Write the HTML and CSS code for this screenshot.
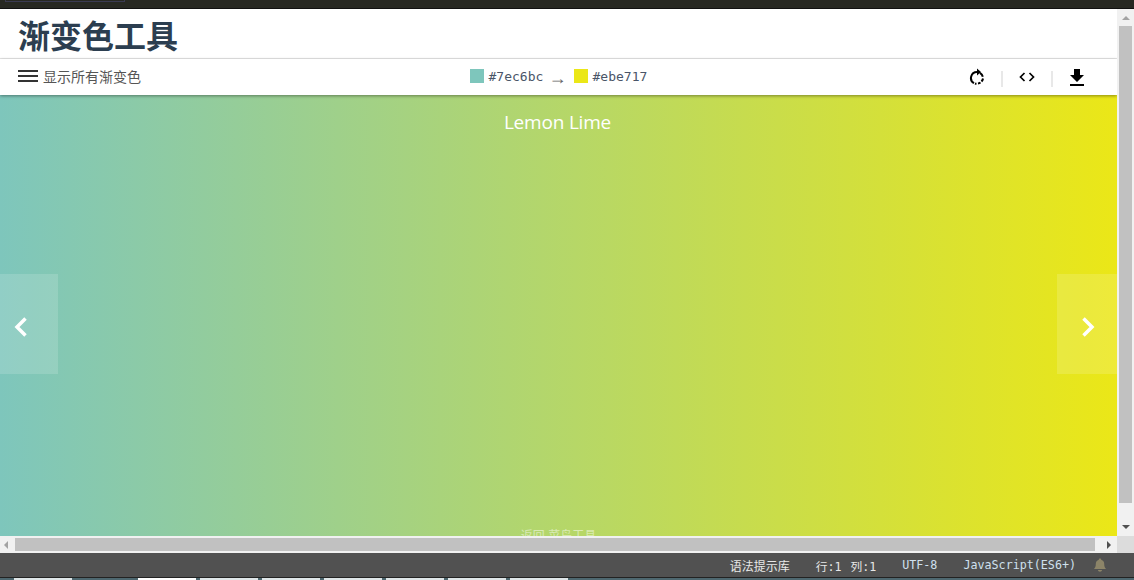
FILE: index.html
```html
<!DOCTYPE html>
<html lang="zh-CN">
<head>
  <meta charset="UTF-8" />
  <title>渐变色工具</title>
  <link rel="stylesheet" href="styles.css">
</head>
<body>
  <div class="topbar"><span class="topbar-tab"></span></div>

  <div class="workspace">
    <div class="preview">
      <header class="title-row">
        <h1>渐变色工具</h1>
      </header>

      <nav class="toolbar">
        <div class="show-all">
          <svg class="menu-icon" width="20" height="12" viewBox="0 0 20 12">
            <path d="M0 1h20M0 6h20M0 11h20" stroke="#333" stroke-width="2" fill="none"/>
          </svg>
          <span>显示所有渐变色</span>
        </div>

        <div class="colors">
          <span class="swatch swatch-start"></span>
          <code>#7ec6bc</code>
          <span class="arrow">→</span>
          <span class="swatch swatch-end"></span>
          <code>#ebe717</code>
        </div>

        <div class="actions">
          <svg class="action-icon" width="16" height="18" viewBox="0 0 16 18">
            <path d="M8 4a6 6 0 0 0-3 11.2" stroke="#000" stroke-width="2" fill="none"/>
            <path d="M8 0.5v7l4-3.500z" fill="#000"/>
            <path d="M11 4.800a6 6 0 0 1 2.800 4M14 10.500a6 6 0 0 1-1.500 3M11.500 14.500a6 6 0 0 1-2.500 1M7.500 15.800a6 6 0 0 1-1.500-.3" stroke="#000" stroke-width="2" fill="none"/>
          </svg>
          <span class="divider"></span>
          <svg class="action-icon" width="16" height="10" viewBox="0 0 16 10">
            <path d="M5.500 1L1.500 5l4 4M10.500 1l4 4-4 4" stroke="#000" stroke-width="1.700" fill="none"/>
          </svg>
          <span class="divider"></span>
          <svg class="action-icon icon-download" width="14" height="17" viewBox="0 0 14 17">
            <path d="M4 0h6v6h4l-7 7-7-7h4zM0 15h14v2H0z" fill="#000"/>
          </svg>
        </div>
      </nav>

      <main class="gradient">
        <h2 class="gradient-name">Lemon Lime</h2>
        <button class="slide slide-prev">
          <svg width="14" height="20" viewBox="0 0 14 20"><path d="M11.500 1.500L3 10l8.500 8.500" stroke="#fff" stroke-width="3.500" fill="none"/></svg>
        </button>
        <button class="slide slide-next">
          <svg width="14" height="20" viewBox="0 0 14 20"><path d="M2.500 1.500L11 10l-8.500 8.500" stroke="#fff" stroke-width="3.500" fill="none"/></svg>
        </button>
        <a class="back-link" href="#">返回 菜鸟工具</a>
      </main>
    </div>

    <div class="vscroll">
      <span class="tri tri-up"></span>
      <span class="vthumb"></span>
      <span class="tri tri-down"></span>
    </div>

    <div class="hscroll">
      <span class="tri tri-left"></span>
      <span class="hthumb"></span>
      <span class="tri tri-right"></span>
    </div>
    <div class="corner"></div>
  </div>

  <footer class="statusbar">
    <span class="status-lib">语法提示库</span>
    <span class="status-pos">行:1<span class="status-col">列:1</span></span>
    <span class="status-enc">UTF-8</span>
    <span class="status-lang">JavaScript(ES6+)</span>
    <svg class="bell" width="14" height="14" viewBox="0 0 14 14">
      <path d="M7 0.500c.8 0 1.200.5 1.200 1.200 2 .6 3 2.200 3 4.300 0 2.500.7 3.700 1.800 5H1c1.100-1.300 1.800-2.500 1.800-5 0-2.100 1-3.700 3-4.300C5.800 1 6.200.5 7 .5zM5 12h4c0 1-.9 1.700-2 1.700S5 13 5 12z" fill="#8c8468"/>
    </svg>
  </footer>

  <div class="tabstrip">
    <span class="tab"></span>
    <span class="tab tab-active tab-skip"></span>
    <span class="tab"></span>
    <span class="tab"></span>
    <span class="tab"></span>
    <span class="tab"></span>
    <span class="tab"></span>
    <span class="tab"></span>
  </div>
</body>
</html>
```
FILE: styles.css
```css
* {
  box-sizing: border-box;
  margin: 0;
  padding: 0;
}

html, body {
  height: 100%;
  overflow: hidden;
}

body {
  display: flex;
  flex-direction: column;
  background-color: #515151;
  font-family: "Liberation Sans", "Noto Sans CJK SC", sans-serif;
}

.topbar {
  height: 9px;
  flex: none;
  background-color: #272822;
  border-bottom: 1px solid #111;
  padding-left: 5px;
}

.topbar-tab {
  display: block;
  width: 120px;
  height: 2px;
  border: 1px solid #3a3a52;
  border-top: none;
}

.workspace {
  height: 544px;
  flex: none;
  display: grid;
  grid-template-columns: 1117px 17px;
  grid-template-rows: 527px 17px;
  background-color: #f1f1f1;
}

.preview {
  display: flex;
  flex-direction: column;
  background-color: #fff;
  overflow: hidden;
}

.title-row {
  height: 50px;
  flex: none;
  padding-left: 18px;
  border-bottom: 1px solid #e7e7e7;
}

.title-row h1 {
  font-size: 32px;
  line-height: 56px;
  color: #2c3e50;
}

.toolbar {
  height: 36px;
  flex: none;
  display: grid;
  grid-template-columns: 1fr auto 1fr;
  align-items: center;
  padding: 0 18px 2px;
  background-color: #fff;
  box-shadow: 0 1px 3px rgba(0, 0, 0, 0.4);
  position: relative;
  z-index: 1;
}

.show-all {
  display: flex;
  align-items: center;
  gap: 5px;
  font-size: 14px;
  color: #555;
}

.colors {
  display: flex;
  align-items: center;
  color: #4a5568;
}

.colors code {
  font-family: "DejaVu Sans Mono", monospace;
  font-size: 13px;
  width: 55px;
  margin-left: 5px;
}

.swatch {
  width: 14px;
  height: 14px;
}

.swatch-start {
  background-color: #7ec6bc;
}

.swatch-end {
  background-color: #ebe717;
}

.arrow {
  width: 25px;
  margin-left: 5px;
  font-size: 18px;
  line-height: 14px;
  color: #666;
  position: relative;
  top: 2px;
}

.actions {
  display: flex;
  align-items: center;
  justify-content: flex-end;
  margin-top: 2px;
  padding-right: 15px;
}

.action-icon {
  display: block;
}

.icon-download {
  margin-left: 1px;
}

.divider {
  width: 2px;
  height: 16px;
  margin: 4px 16px 0;
  background-color: #e8e8e8;
}

.gradient {
  flex: 1;
  position: relative;
  background: linear-gradient(to right, #7ec6bc, #ebe717);
  overflow: hidden;
}

.gradient-name {
  padding: 14px 2px 0 0;
  text-align: center;
  font-family: "Open Sans", sans-serif;
  font-size: 19px;
  font-weight: 400;
  letter-spacing: -0.2px;
  line-height: 26px;
  color: #fff;
}

.slide {
  position: absolute;
  top: 179px;
  width: 58px;
  height: 100px;
  display: flex;
  align-items: center;
  justify-content: center;
  border: none;
  background-color: rgba(255, 255, 255, 0.15);
}

.slide-prev {
  left: 0;
  padding: 6px 16px 0 0;
}

.slide-next {
  right: 0;
  width: 60px;
  padding: 6px 0 0 1px;
}

.back-link {
  position: absolute;
  left: 0;
  right: 0;
  top: 431px;
  text-align: center;
  font-size: 12px;
  color: rgba(255, 255, 255, 0.5);
  text-decoration: none;
}

.vscroll {
  display: flex;
  flex-direction: column;
  align-items: center;
  background-color: #f1f1f1;
}

.vthumb {
  width: 13px;
  height: 477px;
  margin: 6px 0;
  background-color: #c1c1c1;
}

.hscroll {
  display: flex;
  align-items: center;
  background-color: #f1f1f1;
}

.hthumb {
  width: 1080px;
  height: 13px;
  margin: 0 12px 0 7px;
  background-color: #c1c1c1;
}

.corner {
  background-color: #dcdcdc;
}

.tri {
  display: block;
  flex: none;
  width: 0;
  height: 0;
  border-style: solid;
  border-color: transparent;
}

.tri-up {
  margin-top: 7px;
  border-width: 0 4px 4px;
  border-bottom-color: #a3a3a3;
}

.tri-down {
  margin-top: auto;
  margin-bottom: 7px;
  border-width: 4px 4px 0;
  border-top-color: #505050;
}

.tri-left {
  margin-left: 4px;
  border-width: 4px 4px 4px 0;
  border-right-color: #a3a3a3;
}

.tri-right {
  border-width: 4px 0 4px 4px;
  border-left-color: #505050;
}

.statusbar {
  height: 24px;
  flex: none;
  display: flex;
  align-items: center;
  padding-right: 27px;
  justify-content: flex-end;
  background-color: #515151;
  color: #e8e8e8;
  font-family: "DejaVu Sans Mono", "Noto Sans CJK SC", monospace;
  font-size: 11.7px;
}

.status-lib {
  margin-right: 26px;
  font-family: "Noto Sans CJK SC", sans-serif;
  font-size: 12px;
}

.status-pos {
  margin-right: 26px;
}

.status-col {
  margin-left: 9px;
}

.status-enc {
  margin-right: 26px;
  color: #cfe0ee;
}

.status-lang {
  margin-right: 17px;
  color: #cfe0ee;
}

.tabstrip {
  height: 3px;
  flex: none;
  display: flex;
  padding-left: 14px;
  gap: 4px;
  background-color: #4e6870;
  border-top: 1px solid #222;
}

.tab {
  width: 58px;
  background-color: #dfe6e8;
}

.tab-active {
  background-color: #fff;
}

.tab-skip {
  margin-left: 62px;
}
```
